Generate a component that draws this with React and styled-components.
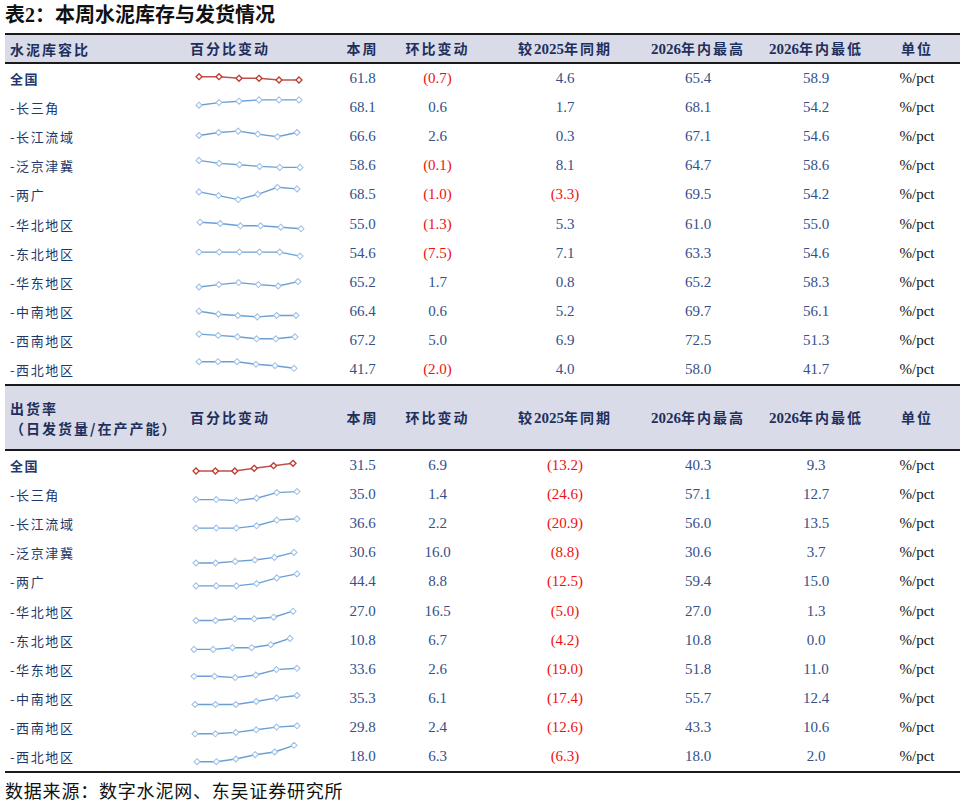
import React from "react";
import styled, { createGlobalStyle } from "styled-components";

const Global = createGlobalStyle`
  html, body { margin: 0; padding: 0; background: #ffffff; }
  body { font-family: "Liberation Serif", "Noto Sans CJK SC", serif; }
`;

const COLS = "180px 157px 41px 109px 146px 120px 116px 86px";
const ROW_H = 29.1;
const CJK = `"Noto Sans CJK SC", "Noto Sans", sans-serif`;
const NUM = `"Liberation Serif", "Noto Sans CJK SC", serif`;

const Page = styled.div`
  width: 965px;
  padding-left: 5px;
  box-sizing: border-box;
`;

const Title = styled.h1`
  margin: 0;
  height: 33px;
  line-height: 30px;
  font-family: ${NUM};
  font-size: 20px;
  font-weight: 700;
  color: #111;
  letter-spacing: 0;
  white-space: nowrap;
`;

const Table = styled.div`
  width: 955px;
  border-bottom: 2px solid #1a1a1a;
`;

const HeaderRow = styled.div`
  display: grid;
  grid-template-columns: ${COLS};
  height: ${(p) => p.$h}px;
  background: #d9dce8;
  border-top: 2px solid #1a1a1a;
  border-bottom: 2px solid #1a1a1a;
  align-items: center;
`;

const HeadCell = styled.div`
  font-family: ${NUM};
  font-size: 15px;
  font-weight: 700;
  color: #1f2f5c;
  white-space: nowrap;
  text-align: ${(p) => (p.$left ? "left" : "center")};
  padding-left: ${(p) => (p.$left ? 5 : 0)}px;
  line-height: 20px;
`;

const Han = styled.span`
  font-family: ${CJK};
  font-size: 14px;
  letter-spacing: 2px;
`;

const HeadLabel = styled.div`
  font-family: ${CJK};
  font-size: 14px;
  font-weight: 700;
  color: #1f2f5c;
  letter-spacing: 2px;
  line-height: 20px;
  padding-left: 5px;
  white-space: nowrap;
`;

const Row = styled.div`
  display: grid;
  grid-template-columns: ${COLS};
  height: ${ROW_H}px;
  align-items: center;
`;

const Label = styled.div`
  font-family: ${CJK};
  font-size: 13px;
  font-weight: ${(p) => (p.$bold ? 700 : 400)};
  color: #23386a;
  letter-spacing: 1.6px;
  padding-left: 5px;
  white-space: nowrap;
`;

const SparkCell = styled.div`
  height: ${ROW_H}px;
  & svg { display: block; }
`;

const Num = styled.div`
  font-family: ${NUM};
  font-size: 15px;
  text-align: center;
  color: ${(p) => (p.$neg ? "#ee1111" : "#34508a")};
  white-space: nowrap;
`;

const Unit = styled.div`
  font-family: ${NUM};
  font-size: 15px;
  text-align: center;
  color: #111;
`;

const Footer = styled.div`
  margin-top: 5px;
  font-family: ${CJK};
  font-size: 18px;
  line-height: 24px;
  letter-spacing: 0.8px;
  color: #111;
  white-space: nowrap;
`;

function Spark({ ys, x0, x1, red }) {
  const n = ys.length;
  const pts = ys.map((y, i) => [x0 - 185 + ((x1 - x0) * i) / (n - 1), y]);
  const line = red ? "#c0504d" : "#6a9fd6";
  const mk = red ? "#c0392b" : "#a3c2e6";
  const d = 3;
  return (
    <svg width="157" height={ROW_H} viewBox={`0 0 157 ${ROW_H}`}>
      <polyline
        points={pts.map((p) => p.join(",")).join(" ")}
        fill="none"
        stroke={line}
        strokeWidth="1.4"
      />
      {pts.map(([x, y], i) => (
        <polygon
          key={i}
          points={`${x},${y - d} ${x + d},${y} ${x},${y + d} ${x - d},${y}`}
          fill="#fff"
          stroke={mk}
          strokeWidth={red ? 1.3 : 1.1}
        />
      ))}
    </svg>
  );
}

const sec1 = [
  ["全国", true, [12.7, 12.7, 14.3, 14.3, 16, 16], 199, 299, "61.8", "(0.7)", "4.6", "65.4", "58.9"],
  ["-长三角", false, [12.2, 9.6, 8.2, 6.9, 6.9, 6.9], 199, 299, "68.1", "0.6", "1.7", "68.1", "54.2"],
  ["-长江流域", false, [13.5, 10.5, 9.1, 12.1, 14.8, 10.5], 199, 297, "66.6", "2.6", "0.3", "67.1", "54.6"],
  ["-泛京津冀", false, [9.4, 12.4, 13.7, 15.4, 16.4, 16.4], 199, 300, "58.6", "(0.1)", "8.1", "64.7", "58.6"],
  ["-两广", false, [11.9, 15.6, 19.6, 14.3, 7.3, 8.9], 199, 297, "68.5", "(1.0)", "(3.3)", "69.5", "54.2"],
  ["-华北地区", false, [13.2, 14.5, 16.8, 16.8, 18.2, 19.8], 200, 301, "55.0", "(1.3)", "5.3", "61.0", "55.0"],
  ["-东北地区", false, [13.1, 13.1, 13.1, 13.1, 13.1, 17.1], 199, 300, "54.6", "(7.5)", "7.1", "63.3", "54.6"],
  ["-华东地区", false, [19, 16.6, 14.6, 16.6, 18, 13.6], 199, 298, "65.2", "1.7", "0.8", "65.2", "58.3"],
  ["-中南地区", false, [14.2, 17.2, 18.5, 19.9, 18.5, 18.5], 199, 296, "66.4", "0.6", "5.2", "69.7", "56.1"],
  ["-西南地区", false, [8.1, 9.4, 10.8, 12.8, 12.8, 10.8], 199, 295, "67.2", "5.0", "6.9", "72.5", "51.3"],
  ["-西北地区", false, [6.7, 6.7, 6.7, 9.3, 10.7, 13.3], 199, 294, "41.7", "(2.0)", "4.0", "58.0", "41.7"],
];

const sec2 = [
  ["全国", true, [20, 20, 20, 17.3, 14.7, 12.3], 196, 293, "31.5", "6.9", "(13.2)", "40.3", "9.3"],
  ["-长三角", false, [19.6, 19.6, 20.6, 18.2, 12.6, 11.6], 196, 297, "35.0", "1.4", "(24.6)", "57.1", "12.7"],
  ["-长江流域", false, [19.1, 19.1, 19.1, 16.8, 11.1, 9.8], 196, 297, "36.6", "2.2", "(20.9)", "56.0", "13.5"],
  ["-泛京津冀", false, [25, 25, 23.4, 22, 19.4, 14.4], 196, 294, "30.6", "16.0", "(8.8)", "30.6", "3.7"],
  ["-两广", false, [18.9, 18.9, 18.9, 16.6, 10.9, 6.9], 196, 297, "44.4", "8.8", "(12.5)", "59.4", "15.0"],
  ["-华北地区", false, [23.5, 23.5, 21.8, 21.8, 20.2, 14.2], 196, 293, "27.0", "16.5", "(5.0)", "27.0", "1.3"],
  ["-东北地区", false, [23.4, 23.4, 21.7, 21.7, 18.7, 12.4], 194, 290, "10.8", "6.7", "(4.2)", "10.8", "0.0"],
  ["-华东地区", false, [21.3, 21.3, 22.6, 20, 14.6, 13.3], 194, 297, "33.6", "2.6", "(19.0)", "51.8", "11.0"],
  ["-中南地区", false, [20.5, 20.5, 20.5, 17.5, 13.9, 11.5], 195, 297, "35.3", "6.1", "(17.4)", "55.7", "12.4"],
  ["-西南地区", false, [20.8, 20.8, 19.4, 16.8, 14.1, 12.8], 195, 297, "29.8", "2.4", "(12.6)", "43.3", "10.6"],
  ["-西北地区", false, [19.7, 19.7, 17, 12.7, 10, 3.3], 197, 294, "18.0", "6.3", "(6.3)", "18.0", "2.0"],
];

function Head({ h, label }) {
  return (
    <HeaderRow $h={h}>
      {label}
      <HeadCell $left><Han>百分比变动</Han></HeadCell>
      <HeadCell><Han>本周</Han></HeadCell>
      <HeadCell><Han>环比变动</Han></HeadCell>
      <HeadCell><Han>较</Han>2025<Han>年同期</Han></HeadCell>
      <HeadCell>2026<Han>年内最高</Han></HeadCell>
      <HeadCell>2026<Han>年内最低</Han></HeadCell>
      <HeadCell><Han>单位</Han></HeadCell>
    </HeaderRow>
  );
}

function Rows({ data }) {
  return data.map((r) => {
    const [label, bold, ys, x0, x1, ...vals] = r;
    return (
      <Row key={label}>
        <Label $bold={bold}>{label}</Label>
        <SparkCell>
          <Spark ys={ys} x0={x0} x1={x1} red={bold} />
        </SparkCell>
        {vals.map((v, i) => (
          <Num key={i} $neg={v.startsWith("(")}>{v}</Num>
        ))}
        <Unit>%/pct</Unit>
      </Row>
    );
  });
}

export default function App() {
  return (
    <Page>
      <Global />
      <Title>表2：本周水泥库存与发货情况</Title>
      <Table>
        <Head h={27} label={<HeadLabel>水泥库容比</HeadLabel>} />
        <Rows data={sec1} />
        <Head
          h={63}
          label={
            <HeadLabel>
              出货率
              <br />
              （日发货量/在产产能）
            </HeadLabel>
          }
        />
        <Rows data={sec2} />
      </Table>
      <Footer>数据来源：数字水泥网、东吴证券研究所</Footer>
    </Page>
  );
}
